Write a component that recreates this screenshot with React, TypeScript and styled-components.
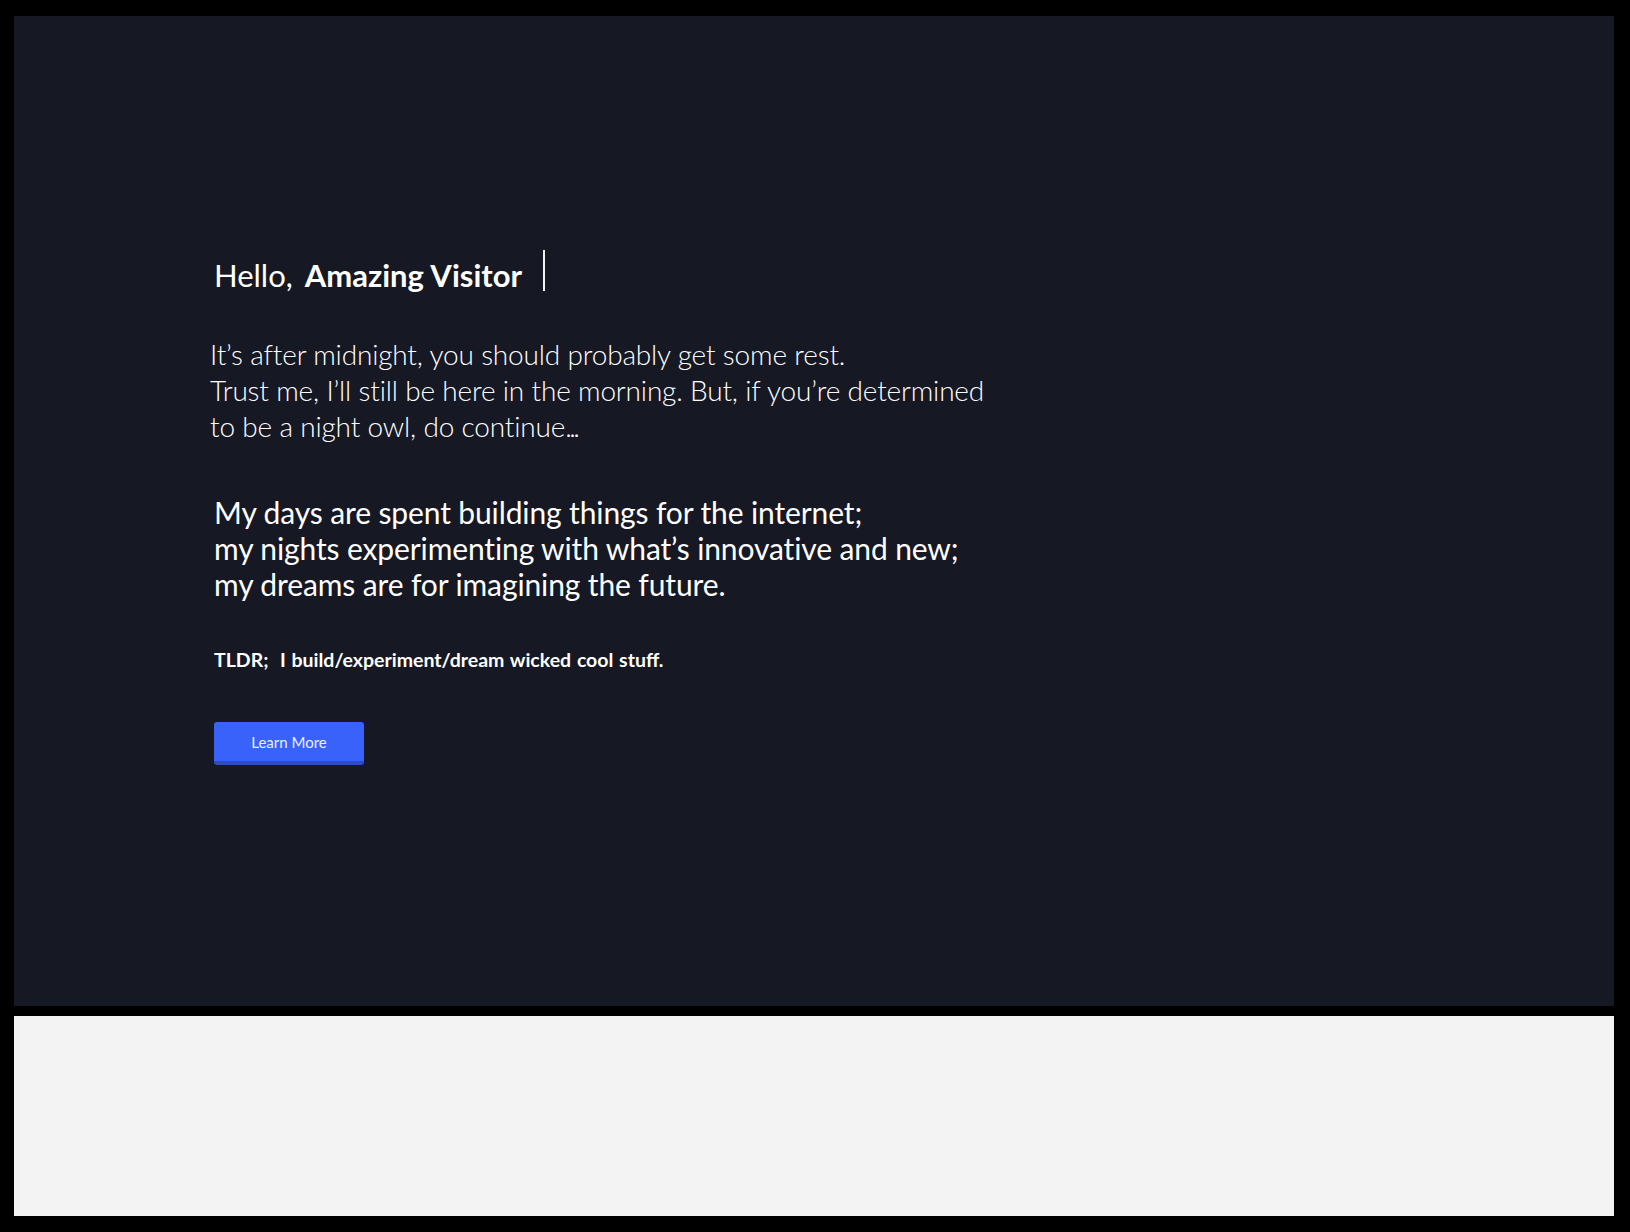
import React from "react";
import styled, { createGlobalStyle } from "styled-components";

const Global = createGlobalStyle`
  html, body { margin: 0; padding: 0; background: #000; }
  body { font-family: Lato, "Open Sans", sans-serif; }
`;

const Page = styled.div`
  display: flex;
  flex-direction: column;
  gap: 10px;
  padding: 16px 16px 16px 14px;
  min-height: 1232px;
  box-sizing: border-box;
`;

const Hero = styled.section`
  height: 990px;
  background: #161824;
  box-sizing: border-box;
  padding: 236px 0 0 200px;
  display: flex;
  flex-direction: column;
  align-items: flex-start;
`;

const Lower = styled.section`
  height: 200px;
  background: #f3f3f3;
`;

const Greeting = styled.h1`
  margin: 0;
  display: flex;
  align-items: center;
  height: 46px;
  font-size: 31px;
  font-weight: 400;
  color: #fff;
  line-height: 46px;
`;

const Name = styled.strong`
  font-weight: 700;
  margin-left: 12px;
`;

const Caret = styled.span`
  display: inline-block;
  width: 2px;
  height: 41px;
  background: #f4f4f4;
  margin: -9px 0 0 21px;
`;

const Para = styled.p<{ $weight: number; $size: number; $shift?: number; $top: number; $track?: number }>`
  margin: ${(p) => p.$top}px 0 0 ${(p) => p.$shift ?? 0}px;
  font-size: ${(p) => p.$size}px;
  font-weight: ${(p) => p.$weight};
  letter-spacing: ${(p) => p.$track ?? 0}px;
  line-height: 36px;
  color: #fff;
`;

const Dots = styled.span`
  letter-spacing: -2.5px;
`;

const Tldr = styled.p`
  margin: 45px 0 0 0;
  font-size: 19.5px;
  font-weight: 700;
  color: #fff;
  line-height: 26px;
  word-spacing: 1px;
`;

const Button = styled.button`
  margin-top: 49px;
  width: 150px;
  height: 43px;
  border: none;
  border-bottom: 4px solid #2d4ec0;
  border-radius: 3px;
  background: #3862fa;
  color: #eef0ff;
  font-family: Lato, sans-serif;
  font-size: 15px;
  font-weight: 400;
  cursor: pointer;
  padding: 0;
`;

export default function App() {
  return (
    <>
      <Global />
      <Page>
        <Hero>
          <Greeting>
            Hello,<Name>Amazing Visitor</Name>
            <Caret />
          </Greeting>
          <Para $weight={300} $size={28} $shift={-4} $top={38} $track={-0.17}>
            It’s after midnight, you should probably get some rest.
            <br />
            Trust me, I’ll still be here in the morning. But, if you’re determined
            <br />
            to be a night owl, do continue<Dots>...</Dots>
          </Para>
          <Para $weight={400} $size={30} $top={50} $track={-0.12}>
            My days are spent building things for the internet;
            <br />
            my nights experimenting with what’s innovative and new;
            <br />
            my dreams are for imagining the future.
          </Para>
          <Tldr>TLDR;&nbsp; I build/experiment/dream wicked cool stuff.</Tldr>
          <Button>Learn More</Button>
        </Hero>
        <Lower />
      </Page>
    </>
  );
}
